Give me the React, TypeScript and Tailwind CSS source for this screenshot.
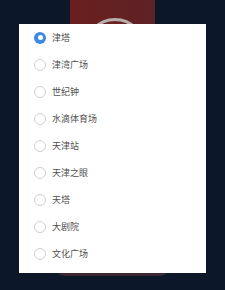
import React from 'react';

const PLACES = [
  '津塔',
  '津湾广场',
  '世纪钟',
  '水滴体育场',
  '天津站',
  '天津之眼',
  '天塔',
  '大剧院',
  '文化广场',
];

function Radio({ checked }: { checked: boolean }) {
  return checked ? (
    <span className="flex h-[12px] w-[12px] shrink-0 items-center justify-center rounded-full bg-[#3d8ae6]">
      <span className="h-[5px] w-[5px] rounded-full bg-white" />
    </span>
  ) : (
    <span className="h-[12px] w-[12px] shrink-0 rounded-full border border-[#cfcfcf] bg-white" />
  );
}

export default function App() {
  const selected = 0;
  return (
    <div
      className="relative h-[290px] w-[225px] overflow-hidden bg-[#0c1829] pl-[19px] pt-[24px]"
      style={{ fontFamily: '"Noto Sans CJK SC", "Noto Sans", sans-serif' }}
    >
      {/* page behind the picker, dimmed by the overlay */}
      <div className="absolute left-[70px] top-0 h-[40px] w-[85px] bg-gradient-to-r from-[#6a1f1e] to-[#5e2226]" />
      <div className="absolute left-[84px] top-[18px] h-[62px] w-[62px] rounded-full border-[3px] border-[#b9aeae] bg-[#6a2222]" />
      <div className="absolute left-[55px] top-[262px] h-[14px] w-[115px] rounded-b-[10px] bg-[#3e2833]" />

      {/* picker dialog */}
      <div className="relative h-[249px] w-[187px] overflow-hidden bg-white">
        <ul>
          {PLACES.map((name, idx) => (
            <li key={name} className="flex h-[27px] items-center gap-[6px] pl-[15px]">
              <Radio checked={idx === selected} />
              <span className="text-[9px] leading-none text-[#4f4f4f]">{name}</span>
            </li>
          ))}
          <li className="flex h-[27px] items-center pl-[15px]">
            <Radio checked={false} />
          </li>
        </ul>
      </div>
    </div>
  );
}
